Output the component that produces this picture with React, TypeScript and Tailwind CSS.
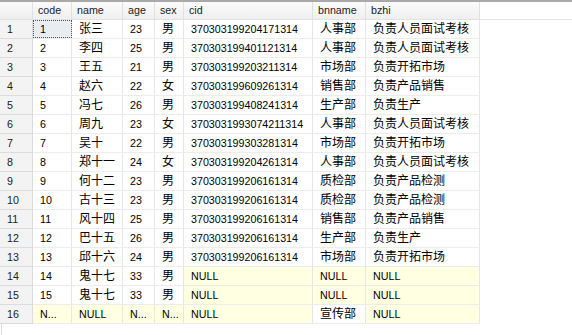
import React from "react";

type Cell = string | null;

const columns = [
  { name: "code", width: "w-[39px]" },
  { name: "name", width: "w-[51px]" },
  { name: "age", width: "w-[32px]" },
  { name: "sex", width: "w-[29px]" },
  { name: "cid", width: "w-[129px]" },
  { name: "bnname", width: "w-[53px]" },
  { name: "bzhi", width: "w-[114px]" },
];

const rows: Cell[][] = [
  ["1", "张三", "23", "男", "370303199204171314", "人事部", "负责人员面试考核"],
  ["2", "李四", "25", "男", "370303199401121314", "人事部", "负责人员面试考核"],
  ["3", "王五", "21", "男", "370303199203211314", "市场部", "负责开拓市场"],
  ["4", "赵六", "22", "女", "370303199609261314", "销售部", "负责产品销售"],
  ["5", "冯七", "26", "男", "370303199408241314", "生产部", "负责生产"],
  ["6", "周九", "23", "女", "3703031993074211314", "人事部", "负责人员面试考核"],
  ["7", "吴十", "22", "男", "370303199303281314", "市场部", "负责开拓市场"],
  ["8", "郑十一", "24", "女", "370303199204261314", "人事部", "负责人员面试考核"],
  ["9", "何十二", "23", "男", "370303199206161314", "质检部", "负责产品检测"],
  ["10", "古十三", "23", "男", "370303199206161314", "质检部", "负责产品检测"],
  ["11", "风十四", "25", "男", "370303199206161314", "销售部", "负责产品销售"],
  ["12", "巴十五", "26", "男", "370303199206161314", "生产部", "负责生产"],
  ["13", "邱十六", "24", "男", "370303199206161314", "市场部", "负责开拓市场"],
  ["14", "鬼十七", "33", "男", null, null, null],
  ["15", "鬼十七", "33", "男", null, null, null],
  [null, null, null, null, null, "宣传部", null],
];

const narrow = new Set([0, 2, 3]);

function isCjk(s: string) {
  return /[\u4e00-\u9fff]/.test(s);
}

function DataCell({ value, col, row }: { value: Cell; col: number; row: number }) {
  const isNull = value === null;
  const text = isNull ? (narrow.has(col) ? "N..." : "NULL") : value;
  const selected = row === 0 && col === 0;
  return (
    <div
      className={`${columns[col].width} h-full flex items-center pl-[7px] border-r border-[#e6e6e6] whitespace-nowrap overflow-hidden ${
        isNull ? "bg-[#ffffe1]" : selected ? "bg-[#e8edf2]" : "bg-white"
      } ${selected ? "outline outline-1 outline-dotted outline-[#555] -outline-offset-1" : ""}`}
    >
      <span
        className={`text-black ${isCjk(text) ? "text-[12px]" : "text-[10.7px]"}`}
        style={{ fontFamily: '"Liberation Sans", "Noto Sans CJK SC", sans-serif' }}
      >
        {text}
      </span>
    </div>
  );
}

export default function App() {
  return (
    <div
      className="w-[572px] h-[335px] bg-white overflow-hidden border-t-2 border-[#a9a9a9] flex flex-col"
      style={{ fontFamily: '"Liberation Sans", "Noto Sans CJK SC", sans-serif' }}
    >
      <div className="flex h-[18px] border-b border-[#e2e2e2]">
        <div className="w-[33px] h-full bg-gradient-to-b from-[#fbfbfb] to-[#eeeeee] border-r border-[#e0e0e0]" />
        {columns.map((c) => (
          <div
            key={c.name}
            className={`${c.width} h-full flex items-center pl-[5px] bg-gradient-to-b from-[#fbfbfb] to-[#efefef] border-r border-[#e0e0e0] text-[10.7px] text-[#222]`}
          >
            {c.name}
          </div>
        ))}
        <div className="flex-1 h-full bg-white" />
      </div>
      {rows.map((r, i) => (
        <div key={i} className="flex h-[19px]">
          <div className="w-[33px] h-full flex items-center pl-[7px] bg-[#f3f3f3] border-r border-b border-[#dcdcdc] text-[10.7px] text-[#222]">
            {i + 1}
          </div>
          <div className="flex h-full border-b border-[#ececec]">
            {r.map((v, j) => (
              <DataCell key={j} value={v} col={j} row={i} />
            ))}
          </div>
          <div className="flex-1 h-full bg-white" />
        </div>
      ))}
      <div className="flex-1 flex">
        <div className="w-[2px] border-r border-[#dcdcdc]" />
      </div>
    </div>
  );
}
